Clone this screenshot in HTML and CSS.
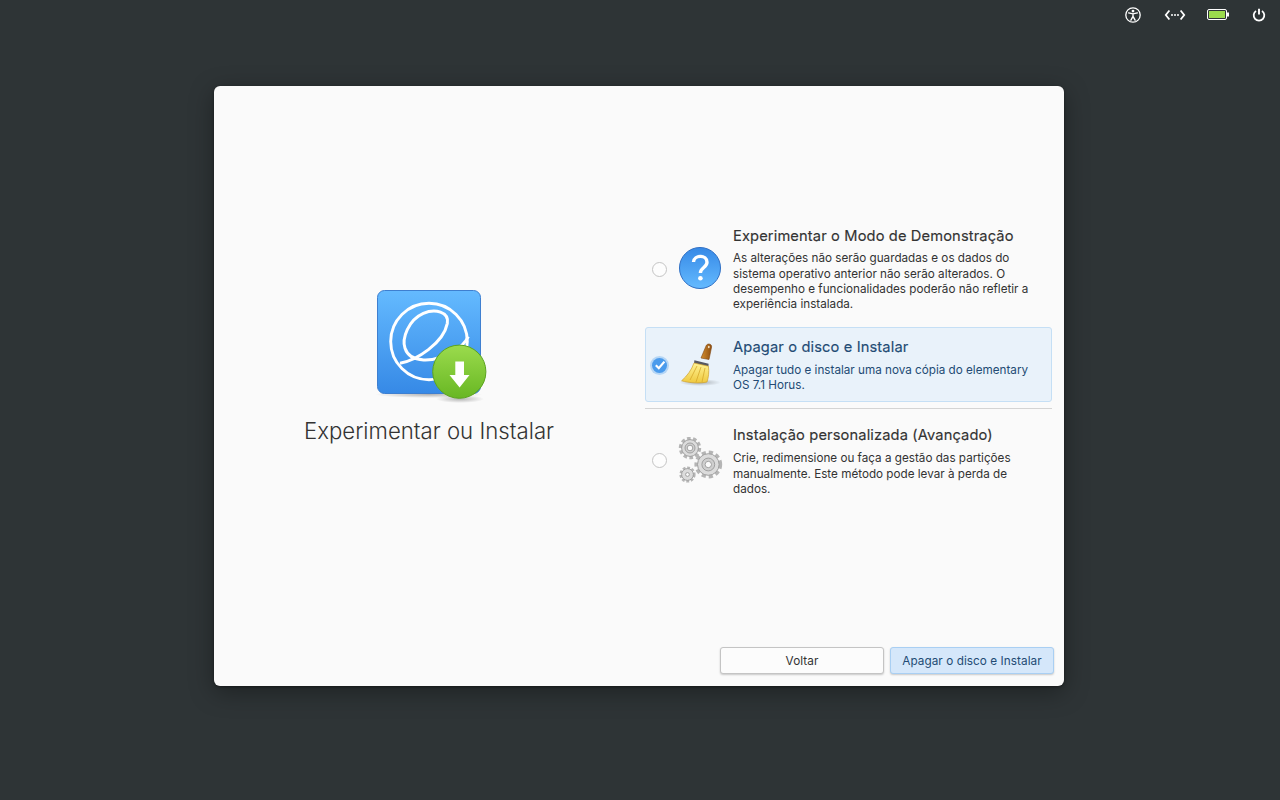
FILE: index.html
```html
<!DOCTYPE html>
<html lang="pt">
<head>
<meta charset="utf-8">
<title>Experimentar ou Instalar</title>
<link rel="stylesheet" href="styles.css">
</head>
<body>
<header class="panel">
  <svg class="ind ind-a11y" width="18" height="18" viewBox="0 0 18 18"><circle cx="9" cy="9" r="7.2" fill="none" stroke="#fff" stroke-width="1.3"/><circle cx="9" cy="5.1" r="1.4" fill="#fff"/><path d="M4.6 6.9 L9 7.9 L13.4 6.9 M9 7.9 V10.6 M9 10.4 L6.9 14.2 M9 10.4 L11.1 14.2" fill="none" stroke="#fff" stroke-width="1.4" stroke-linecap="round"/></svg>
  <svg class="ind ind-net" width="22" height="12" viewBox="0 0 22 12"><path d="M5.4 1.5 L1.8 6 L5.4 10.5 M16.6 1.5 L20.2 6 L16.6 10.5" fill="none" stroke="#fff" stroke-width="1.8"/><circle cx="8" cy="6" r="1" fill="#fff"/><circle cx="11" cy="6" r="1" fill="#fff"/><circle cx="14" cy="6" r="1" fill="#fff"/></svg>
  <svg class="ind ind-bat" width="22" height="12" viewBox="0 0 22 12"><rect x=".5" y=".5" width="19" height="10" rx="1.5" fill="#2e3436" stroke="#fff"/><rect x="2" y="2" width="16" height="7" fill="#9bdb4d"/><rect x="20" y="3.5" width="2" height="4" fill="#fff"/></svg>
  <svg class="ind ind-pow" width="14" height="14" viewBox="0 0 14 14"><path d="M4 2.9 A5.3 5.3 0 1 0 10 2.9" fill="none" stroke="#fff" stroke-width="1.8"/><path d="M7 .8 V6.4" stroke="#fff" stroke-width="1.9" fill="none"/></svg>
</header>
<main class="window">
  <div class="content">
    <section class="intro">
      <svg class="logo" width="140" height="130" viewBox="0 0 140 130">
        <defs>
          <linearGradient id="tile" x1="0" y1="0" x2="0" y2="1"><stop offset="0" stop-color="#64baff"/><stop offset="1" stop-color="#3689e6"/></linearGradient>
          <linearGradient id="dl" x1="0" y1="0" x2="0" y2="1"><stop offset="0" stop-color="#9bdb4d"/><stop offset="1" stop-color="#68b723"/></linearGradient>
          <radialGradient id="shade"><stop offset="0" stop-color="#000" stop-opacity=".28"/><stop offset="1" stop-color="#000" stop-opacity="0"/></radialGradient>
        </defs>
        <ellipse cx="69" cy="114.5" rx="54" ry="3.5" fill="url(#shade)"/>
        <rect x="17.5" y="10.5" width="103" height="103" rx="7" fill="url(#tile)" stroke="#3e7fd0"/>
        <circle cx="69" cy="61.5" r="38.3" fill="none" stroke="#fff" stroke-width="2.9"/>
        <g transform="scale(.33333)"><path d="M120 250 C170 240 250 190 262 130 C268 95 225 85 190 100 C145 120 125 175 135 205 C150 250 220 250 280 215 C300 203 315 190 325 170" fill="none" stroke="#fff" stroke-width="9"/></g>
        <ellipse cx="100" cy="119" rx="24" ry="4" fill="url(#shade)"/>
        <circle cx="99.3" cy="91.7" r="26.6" fill="url(#dl)" stroke="#5ba31f"/>
        <path d="M95.3 81.5 H104 V95 H109.5 L99.6 107.5 L89.5 95 H95.3 Z" fill="#fff"/>
      </svg>
      <h1 class="heading">Experimentar ou Instalar</h1>
    </section>
    <section class="options">
      <label class="opt opt-first">
        <span class="radio"></span>
        <svg class="opt-icon" width="48" height="48" viewBox="0 1 48 48">
          <defs><linearGradient id="q" x1="0" y1="0" x2="0" y2="1"><stop offset="0" stop-color="#3689e6"/><stop offset="1" stop-color="#64baff"/></linearGradient></defs>
          <circle cx="24" cy="24" r="20.5" fill="url(#q)" stroke="#2f6fc4"/>
          <path d="M17.5 18 C18 10.5 31 10.5 31 18.3 C31 23.5 24.4 23.5 24.4 29" fill="none" stroke="#fff" stroke-width="3.4"/>
          <circle cx="24.4" cy="34.3" r="2.3" fill="#fff"/>
        </svg>
        <span class="opt-text">
          <span class="opt-title">Experimentar o Modo de Demonstração</span>
          <span class="opt-desc">As alterações não serão guardadas e os dados do sistema operativo anterior não serão alterados. O desempenho e funcionalidades poderão não refletir a experiência instalada.</span>
        </span>
      </label>
      <label class="opt opt-active">
        <span class="check"><svg width="12" height="12" viewBox="0 0 12 12"><path d="M1.8 6.2 L4.8 9.2 L10.4 2.6" fill="none" stroke="#fff" stroke-width="2.2"/></svg></span>
        <svg class="opt-icon" width="48" height="48" viewBox="0 0 48 48">
          <defs>
            <linearGradient id="bristle" x1="0" y1="0" x2="0" y2="1"><stop offset="0" stop-color="#fff394"/><stop offset="1" stop-color="#efc93f"/></linearGradient>
            <linearGradient id="wood" x1="0" y1="0" x2="1" y2="0"><stop offset="0" stop-color="#d48e30"/><stop offset="1" stop-color="#8f4f10"/></linearGradient>
          </defs>
          <ellipse cx="24" cy="41.5" rx="21" ry="3.5" fill="url(#shade)"/>
          <path d="M25 17 L30 5 C31 2 36 2.5 35.6 6 L33 18.5 Z" fill="url(#wood)" stroke="#7d4510" stroke-width=".6"/>
          <ellipse cx="32.8" cy="6" rx=".9" ry="1.3" fill="#f3e0c0"/>
          <path d="M18.4 19.3 L32.6 22.7 L32.4 25.4 L18 22.2 Z" fill="#555761"/>
          <path d="M18 22 L32.4 25.2 C33.3 31 32.4 37 31 41 C24 42.6 13 42 5.6 39.8 C11 35 15.6 29 18 22 Z" fill="url(#bristle)" stroke="#cfa02c" stroke-width=".7"/>
          <path d="M21 25 L14 39 M25 26 L20 41 M29 27 L26 41" stroke="#d6a82c" stroke-width=".8" fill="none"/>
        </svg>
        <span class="opt-text">
          <span class="opt-title">Apagar o disco e Instalar</span>
          <span class="opt-desc">Apagar tudo e instalar uma nova cópia do elementary OS 7.1 Horus.</span>
        </span>
      </label>
      <div class="sep"></div>
      <label class="opt">
        <span class="radio"></span>
        <svg class="opt-icon" width="48" height="48" viewBox="0 1 48 48">
          <g fill="#dcdcdc" stroke="#9a9a9a" stroke-width=".9">
            <circle cx="14" cy="12" r="9.6" stroke-dasharray="3.6 2.4" stroke-width="3.2" stroke="#b5b5b5" fill="none"/>
            <circle cx="14" cy="12" r="8.4"/>
            <circle cx="14" cy="12" r="5" fill="#cfcfcf"/>
            <circle cx="14" cy="12" r="2.8" fill="#fafafa"/>
            <circle cx="11.5" cy="38.5" r="6.8" stroke-dasharray="2.8 1.7" stroke-width="2.6" stroke="#b5b5b5" fill="none"/>
            <circle cx="11.5" cy="38.5" r="5.9"/>
            <circle cx="11.5" cy="38.5" r="1.9" fill="#fafafa"/>
            <circle cx="32.3" cy="28.5" r="12.2" stroke-dasharray="4.2 3" stroke-width="3.4" stroke="#b5b5b5" fill="none"/>
            <circle cx="32.3" cy="28.5" r="10.8"/>
            <circle cx="32.3" cy="28.5" r="6.4" fill="#cfcfcf"/>
            <circle cx="32.3" cy="28.5" r="3.2" fill="#fafafa"/>
          </g>
        </svg>
        <span class="opt-text">
          <span class="opt-title">Instalação personalizada (Avançado)</span>
          <span class="opt-desc">Crie, redimensione ou faça a gestão das partições manualmente. Este método pode levar à perda de dados.</span>
        </span>
      </label>
    </section>
  </div>
  <footer class="actions">
    <button class="btn">Voltar</button>
    <button class="btn btn-suggested">Apagar o disco e Instalar</button>
  </footer>
</main>
</body>
</html>
```
FILE: styles.css
```css
* { box-sizing: border-box; }
html, body { margin: 0; height: 100%; }
body {
  width: 1280px; height: 800px; overflow: hidden;
  background: #2e3436;
  font-family: Inter, "Noto Sans", sans-serif;
  color: #333;
}
.panel {
  height: 30px;
  padding-right: 14px;
  display: flex; align-items: center; justify-content: flex-end;
}
.ind-a11y { margin-right: 22px; }
.ind-net { margin-right: 21px; }
.ind-bat { margin-right: 23px; }
.window {
  width: 850px; height: 600px;
  margin: 56px 0 0 214px;
  background: #fafafa;
  border-radius: 6px;
  box-shadow: 0 6px 24px rgba(0,0,0,.35), 0 1px 3px rgba(0,0,0,.4);
  display: flex; flex-direction: column;
}
.content { flex: 1; display: flex; align-items: center; padding-right: 12px; }
.intro {
  width: 431px;
  padding-bottom: 6px;
  display: flex; flex-direction: column; align-items: center;
}
.logo { display: block; margin-bottom: 5px; margin-left: 1px; }
.heading { margin: 0 0 0 -1px; font-size: 22.2px; font-weight: 300; line-height: 32px; color: #333; }
.options { flex: 1; display: flex; flex-direction: column; gap: 6px; padding-bottom: 12px; }
.opt {
  display: flex; align-items: center;
  padding: 9px 12px 7px 6px;
  border: 1px solid transparent;
  border-radius: 3px;
}
.opt-active { background: #e9f2fa; border-color: #c5dff5; color: #234b74; }
.radio {
  width: 15px; height: 15px; flex: none;
  border: 1px solid #c4c4c4; border-radius: 50%;
  background: #fdfdfd;
}
.check {
  width: 15px; height: 15px; flex: none;
  border-radius: 50%;
  background: #4a9bec;
  box-shadow: 0 0 0 2px #b5d6f5;
  display: flex; align-items: center; justify-content: center;
}
.opt-icon { flex: none; margin: 0 9px 0 9px; display: block; }
.opt-text { display: flex; flex-direction: column; }
.opt-title { font-size: 14.67px; font-weight: 400; line-height: 20px; letter-spacing: .13px; margin-bottom: 6.5px; -webkit-text-stroke: .15px currentColor; }
.opt-first .opt-title { margin-bottom: 5.5px; }
.opt-desc { font-size: 11.7px; line-height: 15.33px; }
.sep { height: 1px; background: #d4d4d4; }
.actions {
  display: flex; justify-content: flex-end; gap: 6px;
  padding: 0 10px 12px 0;
}
.btn {
  width: 164px; height: 27px; padding: 0;
  font: 400 11.75px Inter, "Noto Sans", sans-serif;
  letter-spacing: .06px;
  color: #333;
  background: #fcfcfc;
  border: 1px solid #c4c4c4; border-radius: 3px;
  box-shadow: 0 1px 2px rgba(0,0,0,.2);
}
.btn-suggested { background: #d5e7fa; border-color: #a9cff3; color: #234b74; }
```
